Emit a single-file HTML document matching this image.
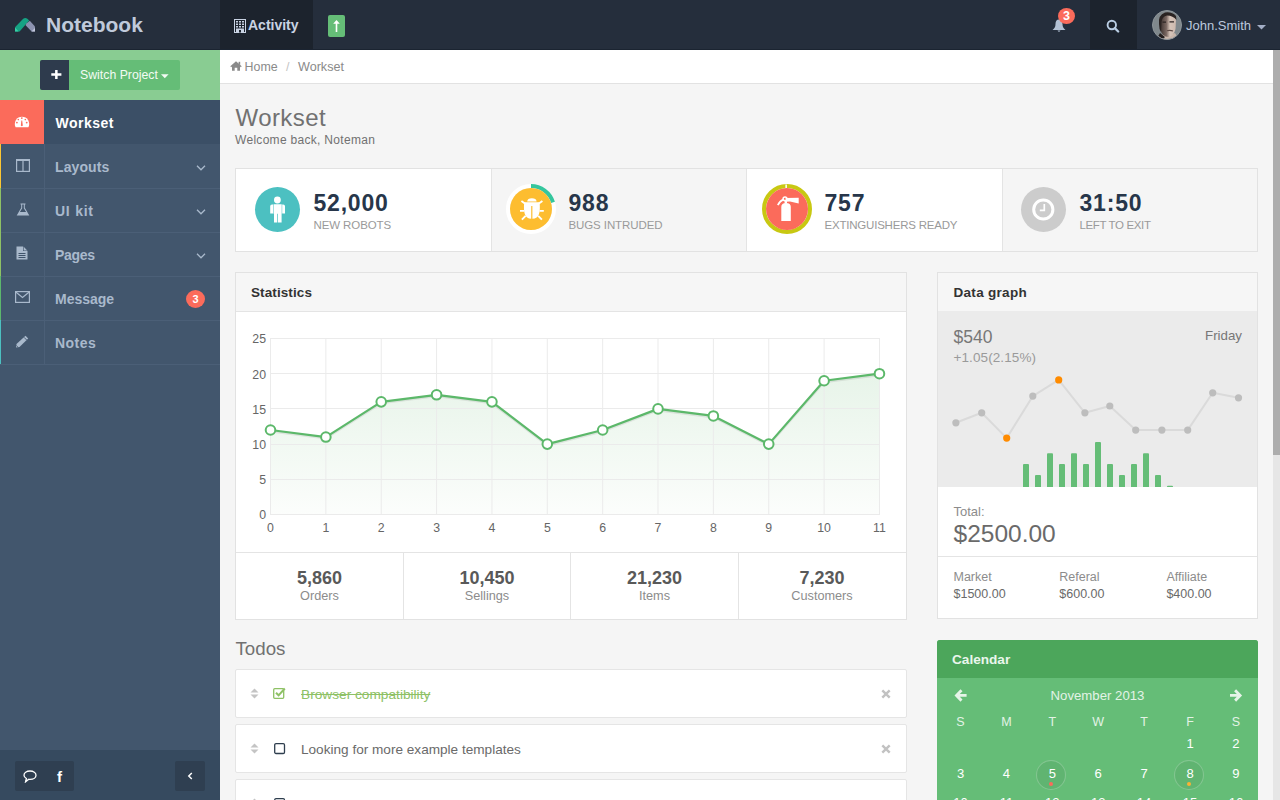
<!DOCTYPE html>
<html><head><meta charset="utf-8"><title>Notebook</title>
<style>
*{box-sizing:border-box;margin:0;padding:0}
html,body{width:1280px;height:800px;overflow:hidden;background:#f5f5f5;font-family:"Liberation Sans",sans-serif}
.a{position:absolute;white-space:nowrap}
#hdr{position:absolute;left:0;top:0;width:1280px;height:50px;background:#252e3c;border-bottom:1px solid #1b2431}
#side{position:absolute;left:0;top:50px;width:220px;height:750px;background:#42566d}
#main{position:absolute;left:220px;top:50px;width:1053px;height:750px;background:#f5f5f5;overflow:hidden}
#sb{position:absolute;left:1273px;top:50px;width:7px;height:750px;background:#e6e6e6}
#sbt{position:absolute;left:1273px;top:50px;width:7px;height:405px;background:#adadad}
.nav{position:absolute;left:0;width:220px;height:44px;border-bottom:1px solid #4a5d73}
.nav .ic{position:absolute;left:0;top:0;width:44px;height:43px;border-right:1px solid #4a5d73}
.nav .t{position:absolute;left:55px;font-size:14px;font-weight:700;color:#a9b9cc;line-height:14px}
.panel{position:absolute;background:#fff;border:1px solid #e3e3e3}
</style></head><body>
<div id="hdr">
<svg class="a" style="left:14px;top:17px" width="23" height="17" viewBox="0 0 23 17">
<path d="M1 14.6 L1 10.2 L9.2 1.8 Q11.2 0.2 13.4 1.8 L15.2 3.6 L5.6 14.6 Z" fill="#16a384"/>
<path d="M1 10.6 L1 14.6 L4.6 14.6 Z" fill="#39d0a6"/>
<path d="M12.4 6.6 L15.8 3.8 L21 9.6 L21 14.6 L17.6 14.6 L11.6 8.2 Z" fill="#8b92b0"/>
<path d="M17.4 14.6 L21 11 L21 14.6 Z" fill="#c3c8dc"/>
</svg>
<div class="a" style="left:46px;top:14.4px;font-size:21px;line-height:21px;font-weight:700;color:#c0cadb">Notebook</div>
<div class="a" style="left:220px;top:0;width:93px;height:49px;background:#1c232d"></div>
<svg class="a" style="left:234px;top:19px" width="12" height="14" viewBox="0 0 12 14">
<rect x="0.5" y="0.5" width="11" height="13" fill="none" stroke="#c9d3e3" stroke-width="1"/>
<g fill="#c9d3e3"><rect x="2" y="2" width="2" height="1.5"/><rect x="5" y="2" width="2" height="1.5"/><rect x="8" y="2" width="2" height="1.5"/>
<rect x="2" y="4.5" width="2" height="1.5"/><rect x="5" y="4.5" width="2" height="1.5"/><rect x="8" y="4.5" width="2" height="1.5"/>
<rect x="2" y="7" width="2" height="1.5"/><rect x="5" y="7" width="2" height="1.5"/><rect x="8" y="7" width="2" height="1.5"/>
<rect x="2" y="9.5" width="8" height="3.5"/></g><rect x="5" y="11" width="2" height="2.5" fill="#1c232d"/>
</svg>
<div class="a" style="left:248px;top:18px;font-size:14px;line-height:14px;font-weight:700;color:#c9d3e3">Activity</div>
<div class="a" style="left:328px;top:15px;width:17px;height:22px;background:#65bd77;border-radius:2px"></div>
<svg class="a" style="left:328px;top:15px" width="17" height="22" viewBox="0 0 17 22">
<path d="M8.5 5 L11.8 8.8 L9.3 8.8 L9.3 17 L7.7 17 L7.7 8.8 L5.2 8.8 Z" fill="#fff"/>
</svg>
<svg class="a" style="left:1052px;top:19px" width="14" height="14" viewBox="0 0 14 14">
<path d="M7 0.5 C4.5 0.5 3.5 2.5 3.5 5 C3.5 8 2.5 9.5 0.5 11 L13.5 11 C11.5 9.5 10.5 8 10.5 5 C10.5 2.5 9.5 0.5 7 0.5 Z M5.5 11.5 Q7 14 8.5 11.5 Z" fill="#b3c1d4"/>
</svg>
<div class="a" style="left:1058px;top:8px;width:17px;height:16px;border-radius:50%;background:#fb6b5b;color:#fff;font-size:12.5px;font-weight:700;line-height:16px;text-align:center">3</div>
<div class="a" style="left:1090px;top:0;width:47px;height:49px;background:#1c232d"></div>
<svg class="a" style="left:1105px;top:19px" width="15" height="14" viewBox="0 0 15 14">
<circle cx="6.8" cy="6" r="4.2" fill="none" stroke="#b9cde3" stroke-width="1.9"/>
<path d="M9.8 9.1 L13.2 12.5" stroke="#b9cde3" stroke-width="2.2" stroke-linecap="round"/>
</svg>
<svg class="a" style="left:1152px;top:10px" width="30" height="30" viewBox="0 0 30 30">
<defs><clipPath id="av"><circle cx="15" cy="15" r="14.5"/></clipPath>
<linearGradient id="fg" x1="0" y1="0" x2="1" y2="0"><stop offset="0" stop-color="#3a302e"/><stop offset="0.4" stop-color="#7a6862"/><stop offset="0.62" stop-color="#d6c4b9"/><stop offset="1" stop-color="#cdb9ae"/></linearGradient></defs>
<g clip-path="url(#av)">
<rect width="30" height="30" fill="#80888c"/>
<path d="M6 30 L8 24 Q15 27 23 23 L27 30 Z" fill="#c9b6ab"/>
<path d="M4 30 L8 23 L13 27 L10 30 Z" fill="#231d1d"/>
<path d="M8 9 Q9 3.5 16 3.5 Q23 4 24 10 L23.5 19 Q22 26 16.5 27 Q10 26.5 8.5 20 Z" fill="url(#fg)"/>
<path d="M7 14 Q6 5 13 2.5 Q20 1.5 24 6 L24.5 10 Q21 5.5 15 5.5 Q10 6.5 9.5 12 L9 22 Q7 19 7 14 Z" fill="#2a2322"/>
<path d="M10.5 12.2 H14 M17.5 11.8 H22" stroke="#2e2625" stroke-width="1.3"/>
<path d="M15 20.8 Q18 19.8 21 21" stroke="#5e4a45" stroke-width="1.1" fill="none"/>
</g>
<circle cx="15" cy="15" r="14.5" fill="none" stroke="#8e959a" stroke-width="1"/>
</svg>
<div class="a" style="left:1186px;top:18.5px;font-size:13px;line-height:13px;color:#bcc8de">John.Smith</div>
<svg class="a" style="left:1257px;top:25px" width="9" height="5" viewBox="0 0 9 5"><path d="M0 0 L9 0 L4.5 4.5 Z" fill="#a3aec6"/></svg>
</div>
<div id="side">
<div class="a" style="left:0;top:0;width:220px;height:50px;background:#89cc92"></div>
<div class="a" style="left:40px;top:10px;width:140px;height:30px;background:#65bd77;border-radius:2px"></div>
<div class="a" style="left:40px;top:10px;width:29px;height:30px;background:#2e3b4d;border-radius:2px 0 0 2px"></div>
<svg class="a" style="left:50.5px;top:20px" width="11" height="9" viewBox="0 0 11 9"><path d="M4.1 0 H6.6 V3.2 H10.4 V5.7 H6.6 V9 H4.1 V5.7 H0.3 V3.2 H4.1 Z" fill="#fff"/></svg>
<div class="a" style="left:80px;top:18.6px;font-size:12.3px;line-height:13px;color:#f3fbf4">Switch Project</div>
<svg class="a" style="left:161px;top:24px" width="8" height="5" viewBox="0 0 8 5"><path d="M0 0.3 L7.6 0.3 L3.8 4.3 Z" fill="#f3fbf4"/></svg>
<!-- nav -->
<div class="a" style="left:0;top:50px;width:220px;height:44px;background:#3b4f66"></div>
<div class="a" style="left:0;top:50px;width:44px;height:44px;background:#fb6b5b"></div>
<svg class="a" style="left:14px;top:65px" width="16" height="13" viewBox="0 0 16 13">
<path d="M1.6 12.2 A7.2 7.2 0 1 1 14.4 12.2 Z" fill="#fff"/>
<g fill="#fb6b5b"><circle cx="7.8" cy="3.1" r="0.9"/><circle cx="4.3" cy="4.6" r="0.8"/><circle cx="11.3" cy="4.6" r="0.8"/><circle cx="2.9" cy="7.6" r="0.9"/><circle cx="12.7" cy="7.6" r="0.9"/><path d="M6.8 10.6 Q7.8 12 8.8 10.6 L8.2 5.5 L7.4 5.5 Z"/></g>
</svg>
<div class="a" style="left:55.5px;top:66.3px;font-size:14px;line-height:14px;font-weight:700;color:#fff;letter-spacing:0.5px">Workset</div>
<div class="a" style="left:0;top:94px;width:1px;height:44px;background:#fcc633"></div>
<div class="a" style="left:0;top:138px;width:220px;height:1px;background:#4b5f77"></div>
<div class="a" style="left:44px;top:94px;width:1px;height:44px;background:#4b5f77"></div>
<svg class="a" style="left:16px;top:109px" width="14" height="13" viewBox="0 0 14 13"><rect x="0.6" y="0.9" width="12.8" height="11.5" fill="none" stroke="#a9b9cc" stroke-width="1.2"/><rect x="0" y="0" width="14" height="2" fill="#a9b9cc"/><path d="M7 0.6 V12.4" stroke="#a9b9cc" stroke-width="1.2"/></svg>
<div class="a" style="left:55px;top:110.3px;font-size:14px;line-height:14px;font-weight:700;color:#a9b9cc;letter-spacing:0.1px">Layouts</div>
<svg class="a" style="left:196px;top:114.5px" width="10" height="6" viewBox="0 0 10 6"><path d="M1 0.8 L5 4.8 L9 0.8" fill="none" stroke="#a9b9cc" stroke-width="1.3"/></svg>
<div class="a" style="left:0;top:138px;width:1px;height:44px;background:#8ec165"></div>
<div class="a" style="left:0;top:182px;width:220px;height:1px;background:#4b5f77"></div>
<div class="a" style="left:44px;top:138px;width:1px;height:44px;background:#4b5f77"></div>
<svg class="a" style="left:16px;top:153px" width="14" height="13" viewBox="0 0 14 13"><path d="M4.5 0.5 H9.5 V1.6 H8.8 V4.8 L13.3 12.5 H0.7 L5.2 4.8 V1.6 H4.5 Z" fill="#a9b9cc"/><path d="M6.2 1.6 V5.2 L3.9 9 H10.1 L7.8 5.2 V1.6 Z" fill="#40546b"/></svg>
<div class="a" style="left:55px;top:154.3px;font-size:14px;line-height:14px;font-weight:700;color:#a9b9cc;letter-spacing:0.75px">UI kit</div>
<svg class="a" style="left:196px;top:158.5px" width="10" height="6" viewBox="0 0 10 6"><path d="M1 0.8 L5 4.8 L9 0.8" fill="none" stroke="#a9b9cc" stroke-width="1.3"/></svg>
<div class="a" style="left:0;top:182px;width:1px;height:44px;background:#8ec165"></div>
<div class="a" style="left:0;top:226px;width:220px;height:1px;background:#4b5f77"></div>
<div class="a" style="left:44px;top:182px;width:1px;height:44px;background:#4b5f77"></div>
<svg class="a" style="left:16px;top:196px" width="12" height="14" viewBox="0 0 12 14"><path d="M0.5 0.5 H7 L11.5 5 V13.5 H0.5 Z" fill="#a9b9cc"/><path d="M7 0.5 V5 H11.5 Z" fill="#40546b"/><path d="M7.6 0.8 L11.2 4.4 H7.6 Z" fill="#a9b9cc"/><path d="M2.5 7.5 H9.5 M2.5 9.5 H9.5 M2.5 11.5 H9.5" stroke="#40546b" stroke-width="1"/></svg>
<div class="a" style="left:55px;top:198.3px;font-size:14px;line-height:14px;font-weight:700;color:#a9b9cc;letter-spacing:-0.3px">Pages</div>
<svg class="a" style="left:196px;top:202.5px" width="10" height="6" viewBox="0 0 10 6"><path d="M1 0.8 L5 4.8 L9 0.8" fill="none" stroke="#a9b9cc" stroke-width="1.3"/></svg>
<div class="a" style="left:0;top:226px;width:1px;height:44px;background:#5cb76d"></div>
<div class="a" style="left:0;top:270px;width:220px;height:1px;background:#4b5f77"></div>
<div class="a" style="left:44px;top:226px;width:1px;height:44px;background:#4b5f77"></div>
<svg class="a" style="left:15px;top:241px" width="15" height="12" viewBox="0 0 15 12"><rect x="0.6" y="0.6" width="13.8" height="10.8" fill="none" stroke="#a9b9cc" stroke-width="1.2"/><path d="M0.8 1 L7.5 6.5 L14.2 1" fill="none" stroke="#a9b9cc" stroke-width="1.2"/></svg>
<div class="a" style="left:55px;top:242.3px;font-size:14px;line-height:14px;font-weight:700;color:#a9b9cc;letter-spacing:0px">Message</div>
<div class="a" style="left:186px;top:239.8px;width:19px;height:18px;border-radius:50%;background:#fb6b5b;color:#fff;font-size:11px;font-weight:700;line-height:18px;text-align:center">3</div>
<div class="a" style="left:0;top:270px;width:1px;height:44px;background:#4cc0c1"></div>
<div class="a" style="left:0;top:314px;width:220px;height:1px;background:#4b5f77"></div>
<div class="a" style="left:44px;top:270px;width:1px;height:44px;background:#4b5f77"></div>
<svg class="a" style="left:15px;top:285px" width="14" height="13" viewBox="0 0 14 13"><path d="M10.5 0.8 L13.2 3.5 L4.5 12 L1 12.5 L1.5 9 Z" fill="#a9b9cc"/><path d="M9 2.3 L11.7 5" stroke="#40546b" stroke-width="0.9"/><path d="M1.3 10.5 L3 12.2" stroke="#40546b" stroke-width="0.8"/></svg>
<div class="a" style="left:55px;top:286.3px;font-size:14px;line-height:14px;font-weight:700;color:#a9b9cc;letter-spacing:0.45px">Notes</div>
<div class="a" style="left:0;top:700px;width:220px;height:50px;background:#364a5f"></div>
<div class="a" style="left:15px;top:711px;width:59px;height:30px;background:#2f3f51;border-radius:2px"></div>
<div class="a" style="left:175px;top:711px;width:30px;height:30px;background:#2f3f51;border-radius:2px"></div>
<svg class="a" style="left:23px;top:720px" width="14" height="13" viewBox="0 0 14 13"><path d="M7 1 C3.5 1 1 2.9 1 5.2 C1 6.6 2 7.8 3.4 8.5 L2.6 11.8 L5.8 9.3 Q6.4 9.4 7 9.4 C10.5 9.4 13 7.5 13 5.2 C13 2.9 10.5 1 7 1 Z" fill="none" stroke="#fff" stroke-width="1.3"/></svg>
<div class="a" style="left:57px;top:719px;font-size:15px;line-height:15px;font-weight:700;color:#fff">f</div>
<svg class="a" style="left:186px;top:721px" width="8" height="10" viewBox="0 0 8 10"><path d="M5.8 2 L2.8 5 L5.8 8" fill="none" stroke="#fff" stroke-width="1.5"/></svg>
</div>
<div id="main">
<div class="a" style="left:0;top:0;width:1053px;height:34px;background:#fff;border-bottom:1px solid #e2e2e2"></div>
<svg class="a" style="left:10px;top:11px" width="12" height="10" viewBox="0 0 12 10"><path d="M6 0.3 L11.7 5.3 L10.8 6.2 L10 5.5 V9.7 H7.3 V6.7 H4.7 V9.7 H2 V5.5 L1.2 6.2 L0.3 5.3 Z" fill="#8a8a8a"/><rect x="8.6" y="0.8" width="1.6" height="3" fill="#8a8a8a"/></svg>
<div class="a" style="left:24.6px;top:10.9px;font-size:12.4px;line-height:13px;color:#8a8a8a">Home</div>
<div class="a" style="left:66px;top:10.9px;font-size:12.4px;line-height:13px;color:#c4c4c4">/</div>
<div class="a" style="left:78px;top:10.9px;font-size:12.6px;line-height:13px;color:#8a8a8a">Workset</div>
<div class="a" style="left:15.6px;top:56px;font-size:24px;line-height:24px;color:#717171;letter-spacing:0.4px">Workset</div>
<div class="a" style="left:15px;top:83.7px;font-size:12px;line-height:12px;color:#717171;letter-spacing:0.3px">Welcome back, Noteman</div>
<div class="a" style="left:15px;top:118px;width:1023px;height:84px;border:1px solid #e2e2e2;background:#fff"></div>
<div class="a" style="left:271px;top:119px;width:255px;height:82px;background:#f5f5f5;border-left:1px solid #e4e4e4"></div>
<div class="a" style="left:526px;top:119px;width:1px;height:82px;background:#e4e4e4"></div>
<div class="a" style="left:782px;top:119px;width:255px;height:82px;background:#f5f5f5;border-left:1px solid #e4e4e4"></div>
<div class="a" style="left:35px;top:137px;width:45px;height:45px;border-radius:50%;background:#4cc0c1"></div>
<svg class="a" style="left:49px;top:146px" width="17" height="27" viewBox="0 0 17 27">
<circle cx="8.4" cy="4" r="3.4" fill="#fff"/>
<path d="M4.6 8.3 H12.7 V17.8 H4.6 Z M1.2 10.2 Q1.2 8.6 3 8.6 H4.1 V17.6 H1.2 Z M16 10.2 Q16 8.6 14.2 8.6 H13.2 V17.6 H16 Z M5 17.6 H8.1 V26.5 H5 Z M8.8 17.6 H12.6 V26.5 H8.8 Z" fill="#fff"/>
</svg>
<svg class="a" style="left:286px;top:134px" width="50" height="50" viewBox="0 0 50 50">
<circle cx="25" cy="25" r="23" fill="none" stroke="#fff" stroke-width="4"/>
<path d="M25 2 A23 23 0 0 1 47 18.3" fill="none" stroke="#35c69d" stroke-width="4"/>
<circle cx="25" cy="25" r="21" fill="#fdbd30"/>
<g fill="#fff">
<path d="M21.2 17.4 Q21.5 14.2 25.9 14.2 Q30.3 14.2 30.6 17.4 Z"/>
<path d="M18.2 18.2 H33.6 Q34.3 26 33 30 Q31.5 34.8 26.4 34.8 V22 H25.2 V34.8 Q20.3 34.8 18.8 30 Q17.5 26 18.2 18.2 Z"/>
</g>
<path d="M15.4 17 L19.6 20 M36.4 17 L32.2 20 M14 26.9 H18.3 M37.8 26.9 H33.5 M15.9 35.6 L19.6 31.8 M35.9 35.6 L32.2 31.8" stroke="#fff" stroke-width="1.9"/>
</svg>
<svg class="a" style="left:542px;top:134px" width="50" height="50" viewBox="0 0 50 50">
<circle cx="25" cy="25" r="23" fill="none" stroke="#c8c812" stroke-width="4"/>
<rect x="23.4" y="0.5" width="1.5" height="4" fill="#fff"/>
<circle cx="25" cy="25" r="21" fill="#fb6b5b"/>
<g fill="#fff">
<path d="M19.3 23 Q19.3 19.2 24 19 Q28.8 19.2 28.8 23 V36.9 H19.3 Z"/>
<circle cx="23" cy="14.8" r="1.9" fill="none" stroke="#fff" stroke-width="1.5"/>
<path d="M23.5 14 L36.7 13.8 V19.6 L28 17.6 L24 17.8 Z"/>
<path d="M21.6 15.4 Q18 16.8 15.8 21.2" fill="none" stroke="#fff" stroke-width="1.7"/>
<rect x="22.6" y="16" width="2.4" height="3.5"/>
</g>
</svg>
<div class="a" style="left:801px;top:137px;width:45px;height:45px;border-radius:50%;background:#cccccc"></div>
<svg class="a" style="left:811px;top:147px" width="24" height="24" viewBox="0 0 24 24">
<circle cx="12.3" cy="12.5" r="9.6" fill="none" stroke="#fff" stroke-width="3"/>
<path d="M13.3 7 V13.3 H8.8" fill="none" stroke="#fff" stroke-width="1.7"/>
</svg>
<div class="a" style="left:93.5px;top:142.4px;font-size:23px;line-height:23px;font-weight:700;color:#27364a;letter-spacing:0.8px">52,000</div>
<div class="a" style="left:93.5px;top:168.5px;font-size:11.5px;line-height:12px;color:#9a9a9a;letter-spacing:-0.1px">NEW ROBOTS</div>
<div class="a" style="left:348.5px;top:142.4px;font-size:23px;line-height:23px;font-weight:700;color:#27364a;letter-spacing:0.8px">988</div>
<div class="a" style="left:348.5px;top:168.5px;font-size:11.5px;line-height:12px;color:#9a9a9a;letter-spacing:-0.1px">BUGS INTRUDED</div>
<div class="a" style="left:604.5px;top:142.4px;font-size:23px;line-height:23px;font-weight:700;color:#27364a;letter-spacing:0.8px">757</div>
<div class="a" style="left:604.5px;top:168.5px;font-size:11.5px;line-height:12px;color:#9a9a9a;letter-spacing:-0.21px">EXTINGUISHERS READY</div>
<div class="a" style="left:859.5px;top:142.4px;font-size:23px;line-height:23px;font-weight:700;color:#27364a;letter-spacing:0.8px">31:50</div>
<div class="a" style="left:859.5px;top:168.5px;font-size:11.5px;line-height:12px;color:#9a9a9a;letter-spacing:-0.36px">LEFT TO EXIT</div>
<div class="a" style="left:15px;top:222px;width:672px;height:348px;border:1px solid #e2e2e2;background:#fff"></div>
<div class="a" style="left:16px;top:223px;width:670px;height:39px;background:#f6f6f6;border-bottom:1px solid #e4e4e4"></div>
<div class="a" style="left:31px;top:235.89999999999998px;font-size:13.5px;line-height:14px;font-weight:700;color:#333;letter-spacing:0.1px">Statistics</div>
<svg class="a" style="left:15px;top:222px" width="672" height="348" viewBox="0 0 672 348" font-family="Liberation Sans" font-size="12.3" fill="#666">
<defs><linearGradient id="ga" x1="0" y1="0" x2="0" y2="1"><stop offset="0" stop-color="#e3f2e5"/><stop offset="1" stop-color="#fbfdfb"/></linearGradient></defs>
<path d="M35.50,158.02 L90.86,165.06 L146.22,129.86 L201.58,122.82 L256.94,129.86 L312.30,172.10 L367.66,158.02 L423.02,136.90 L478.38,143.94 L533.74,172.10 L589.10,108.74 L644.46,101.70 L644.46,242.00 L35.50,242.00 Z" fill="url(#ga)" opacity="0.85"/>
<path d="M35 242.5 H645" stroke="#ebebeb" stroke-width="1"/><path d="M35 207.5 H645" stroke="#ebebeb" stroke-width="1"/><path d="M35 172.5 H645" stroke="#ebebeb" stroke-width="1"/><path d="M35 136.5 H645" stroke="#ebebeb" stroke-width="1"/><path d="M35 101.5 H645" stroke="#ebebeb" stroke-width="1"/><path d="M35 66.5 H645" stroke="#ebebeb" stroke-width="1"/><path d="M35.50 66 V243" stroke="#ebebeb" stroke-width="1"/><path d="M90.86 66 V243" stroke="#ebebeb" stroke-width="1"/><path d="M146.22 66 V243" stroke="#ebebeb" stroke-width="1"/><path d="M201.58 66 V243" stroke="#ebebeb" stroke-width="1"/><path d="M256.94 66 V243" stroke="#ebebeb" stroke-width="1"/><path d="M312.30 66 V243" stroke="#ebebeb" stroke-width="1"/><path d="M367.66 66 V243" stroke="#ebebeb" stroke-width="1"/><path d="M423.02 66 V243" stroke="#ebebeb" stroke-width="1"/><path d="M478.38 66 V243" stroke="#ebebeb" stroke-width="1"/><path d="M533.74 66 V243" stroke="#ebebeb" stroke-width="1"/><path d="M589.10 66 V243" stroke="#ebebeb" stroke-width="1"/><path d="M644.46 66 V243" stroke="#ebebeb" stroke-width="1"/>
<path d="M35.50,159.52 L90.86,166.56 L146.22,131.36 L201.58,124.32 L256.94,131.36 L312.30,173.60 L367.66,159.52 L423.02,138.40 L478.38,145.44 L533.74,173.60 L589.10,110.24 L644.46,103.20" fill="none" stroke="#000" stroke-opacity="0.08" stroke-width="2"/>
<path d="M35.50,158.02 L90.86,165.06 L146.22,129.86 L201.58,122.82 L256.94,129.86 L312.30,172.10 L367.66,158.02 L423.02,136.90 L478.38,143.94 L533.74,172.10 L589.10,108.74 L644.46,101.70" fill="none" stroke="#5cb86a" stroke-width="2.2" stroke-linejoin="round"/>
<circle cx="35.50" cy="158.02" r="4.8" fill="#fff" stroke="#5cb86a" stroke-width="2"/><circle cx="90.86" cy="165.06" r="4.8" fill="#fff" stroke="#5cb86a" stroke-width="2"/><circle cx="146.22" cy="129.86" r="4.8" fill="#fff" stroke="#5cb86a" stroke-width="2"/><circle cx="201.58" cy="122.82" r="4.8" fill="#fff" stroke="#5cb86a" stroke-width="2"/><circle cx="256.94" cy="129.86" r="4.8" fill="#fff" stroke="#5cb86a" stroke-width="2"/><circle cx="312.30" cy="172.10" r="4.8" fill="#fff" stroke="#5cb86a" stroke-width="2"/><circle cx="367.66" cy="158.02" r="4.8" fill="#fff" stroke="#5cb86a" stroke-width="2"/><circle cx="423.02" cy="136.90" r="4.8" fill="#fff" stroke="#5cb86a" stroke-width="2"/><circle cx="478.38" cy="143.94" r="4.8" fill="#fff" stroke="#5cb86a" stroke-width="2"/><circle cx="533.74" cy="172.10" r="4.8" fill="#fff" stroke="#5cb86a" stroke-width="2"/><circle cx="589.10" cy="108.74" r="4.8" fill="#fff" stroke="#5cb86a" stroke-width="2"/><circle cx="644.46" cy="101.70" r="4.8" fill="#fff" stroke="#5cb86a" stroke-width="2"/>
<text x="31" y="247.3" text-anchor="end">0</text><text x="31" y="212.1" text-anchor="end">5</text><text x="31" y="176.9" text-anchor="end">10</text><text x="31" y="141.7" text-anchor="end">15</text><text x="31" y="106.5" text-anchor="end">20</text><text x="31" y="71.3" text-anchor="end">25</text>
<text x="35.5" y="259.5" text-anchor="middle">0</text><text x="90.9" y="259.5" text-anchor="middle">1</text><text x="146.2" y="259.5" text-anchor="middle">2</text><text x="201.6" y="259.5" text-anchor="middle">3</text><text x="256.9" y="259.5" text-anchor="middle">4</text><text x="312.3" y="259.5" text-anchor="middle">5</text><text x="367.7" y="259.5" text-anchor="middle">6</text><text x="423.0" y="259.5" text-anchor="middle">7</text><text x="478.4" y="259.5" text-anchor="middle">8</text><text x="533.7" y="259.5" text-anchor="middle">9</text><text x="589.1" y="259.5" text-anchor="middle">10</text><text x="644.5" y="259.5" text-anchor="middle">11</text>
<path d="M1 280.5 H671" stroke="#e4e4e4"/>
<path d="M168.5 280 V347 M335.5 280 V347 M503.5 280 V347" stroke="#e4e4e4"/>
</svg>
<div class="a" style="left:19.5px;width:160px;text-align:center;top:518.6px;font-size:18px;line-height:18px;font-weight:700;color:#595959">5,860</div>
<div class="a" style="left:19.5px;width:160px;text-align:center;top:539.7px;font-size:12.7px;line-height:13px;color:#8c8c8c">Orders</div>
<div class="a" style="left:187px;width:160px;text-align:center;top:518.6px;font-size:18px;line-height:18px;font-weight:700;color:#595959">10,450</div>
<div class="a" style="left:187px;width:160px;text-align:center;top:539.7px;font-size:12.7px;line-height:13px;color:#8c8c8c">Sellings</div>
<div class="a" style="left:354.5px;width:160px;text-align:center;top:518.6px;font-size:18px;line-height:18px;font-weight:700;color:#595959">21,230</div>
<div class="a" style="left:354.5px;width:160px;text-align:center;top:539.7px;font-size:12.7px;line-height:13px;color:#8c8c8c">Items</div>
<div class="a" style="left:522px;width:160px;text-align:center;top:518.6px;font-size:18px;line-height:18px;font-weight:700;color:#595959">7,230</div>
<div class="a" style="left:522px;width:160px;text-align:center;top:539.7px;font-size:12.7px;line-height:13px;color:#8c8c8c">Customers</div>
<div class="a" style="left:717px;top:222px;width:321px;height:347px;border:1px solid #e2e2e2;background:#fff"></div>
<div class="a" style="left:718px;top:223px;width:319px;height:38px;background:#f6f6f6"></div>
<div class="a" style="left:733.5px;top:235.89999999999998px;font-size:13.5px;line-height:14px;font-weight:700;color:#333;letter-spacing:0.3px">Data graph</div>
<div class="a" style="left:718px;top:261px;width:319px;height:176px;background:#ebebeb"></div>
<svg class="a" style="left:717px;top:261px" width="321" height="176" viewBox="0 0 321 176">
<rect x="86" y="153.0" width="6" height="24.0" rx="1" fill="#65bd77"/><rect x="98" y="164.0" width="6" height="13.0" rx="1" fill="#65bd77"/><rect x="110" y="142.2" width="6" height="34.8" rx="1" fill="#65bd77"/><rect x="122" y="153.0" width="6" height="24.0" rx="1" fill="#65bd77"/><rect x="134" y="142.2" width="6" height="34.8" rx="1" fill="#65bd77"/><rect x="146" y="153.0" width="6" height="24.0" rx="1" fill="#65bd77"/><rect x="158" y="131.0" width="6" height="46.0" rx="1" fill="#65bd77"/><rect x="170" y="153.0" width="6" height="24.0" rx="1" fill="#65bd77"/><rect x="182" y="164.0" width="6" height="13.0" rx="1" fill="#65bd77"/><rect x="194" y="153.0" width="6" height="24.0" rx="1" fill="#65bd77"/><rect x="206" y="142.2" width="6" height="34.8" rx="1" fill="#65bd77"/><rect x="218" y="164.0" width="6" height="13.0" rx="1" fill="#65bd77"/><rect x="230" y="174.8" width="6" height="2.2" rx="1" fill="#65bd77"/>
<path d="M18.9,111.8 L44.7,101.8 L69.7,127.1 L95.8,85.1 L121.7,68.9 L147.9,101.8 L172.8,95.0 L198.7,119.1 L224.9,119.1 L250.7,119.1 L275.7,81.8 L301.5,86.8" fill="none" stroke="#dadada" stroke-width="2" stroke-linejoin="round"/>
<circle cx="18.9" cy="111.8" r="3.6" fill="#bdbdbd"/><circle cx="44.7" cy="101.8" r="3.6" fill="#bdbdbd"/><circle cx="69.7" cy="127.1" r="3.6" fill="#ff8b00"/><circle cx="95.8" cy="85.1" r="3.6" fill="#bdbdbd"/><circle cx="121.7" cy="68.9" r="3.6" fill="#ff8b00"/><circle cx="147.9" cy="101.8" r="3.6" fill="#bdbdbd"/><circle cx="172.8" cy="95.0" r="3.6" fill="#bdbdbd"/><circle cx="198.7" cy="119.1" r="3.6" fill="#bdbdbd"/><circle cx="224.9" cy="119.1" r="3.6" fill="#bdbdbd"/><circle cx="250.7" cy="119.1" r="3.6" fill="#bdbdbd"/><circle cx="275.7" cy="81.8" r="3.6" fill="#bdbdbd"/><circle cx="301.5" cy="86.8" r="3.6" fill="#bdbdbd"/>
</svg>
<div class="a" style="left:733.5px;top:277.8px;font-size:17.5px;line-height:18px;color:#777">$540</div>
<div class="a" style="left:733.5px;top:301.4px;font-size:13.5px;line-height:14px;color:#9a9a9a;letter-spacing:0.1px">+1.05(2.15%)</div>
<div class="a" style="left:930px;width:92px;text-align:right;top:278.7px;font-size:13.3px;line-height:14px;color:#777">Friday</div>
<div class="a" style="left:733.5px;top:455px;font-size:13px;line-height:13px;color:#8c8c8c">Total:</div>
<div class="a" style="left:733.5px;top:470.8px;font-size:24.5px;line-height:25px;color:#6a6a6a">$2500.00</div>
<div class="a" style="left:718px;top:506px;width:319px;height:1px;background:#e4e4e4"></div>
<div class="a" style="left:733.5px;top:520.5px;font-size:12.5px;line-height:13px;color:#8c8c8c">Market</div>
<div class="a" style="left:733.5px;top:537.6px;font-size:12.5px;line-height:13px;color:#6a6a6a">$1500.00</div>
<div class="a" style="left:839.3px;top:520.5px;font-size:12.5px;line-height:13px;color:#8c8c8c">Referal</div>
<div class="a" style="left:839.3px;top:537.6px;font-size:12.5px;line-height:13px;color:#6a6a6a">$600.00</div>
<div class="a" style="left:946.4000000000001px;top:520.5px;font-size:12.5px;line-height:13px;color:#8c8c8c">Affiliate</div>
<div class="a" style="left:946.4000000000001px;top:537.6px;font-size:12.5px;line-height:13px;color:#6a6a6a">$400.00</div>
<div class="a" style="left:717px;top:590px;width:321px;height:200px;background:#65bd77;border-radius:3px 3px 0 0"></div>
<div class="a" style="left:717px;top:590px;width:321px;height:38px;background:#4ca65b;border-radius:3px 3px 0 0"></div>
<div class="a" style="left:732px;top:602.8px;font-size:13.6px;line-height:14px;font-weight:700;color:#eaf6ec">Calendar</div>
<svg class="a" style="left:733px;top:639px" width="14" height="13" viewBox="0 0 14 13"><path d="M1.5,6.4 L7.5,0.2 L9.5,2.3 L6.8,5.1 L13.6,5.1 L13.6,7.7 L6.8,7.7 L9.5,10.5 L7.5,12.7 Z" fill="#e6f4e8"/></svg>
<svg class="a" style="left:1009px;top:639px" width="14" height="13" viewBox="0 0 14 13"><path d="M13.1,6.4 L7.1,0.2 L5.1,2.3 L7.8,5.1 L1.0,5.1 L1.0,7.7 L7.8,7.7 L5.1,10.5 L7.1,12.7 Z" fill="#e6f4e8"/></svg>
<div class="a" style="left:820px;width:115px;text-align:center;top:639px;font-size:13.2px;line-height:14px;color:#e3f3e6">November 2013</div>
<div class="a" style="left:816px;top:710px;width:30px;height:30px;border-radius:50%;border:1px solid rgba(255,255,255,0.22);background:rgba(0,0,0,0.045)"></div>
<div class="a" style="left:954px;top:710px;width:30px;height:30px;border-radius:50%;border:1px solid rgba(255,255,255,0.22);background:rgba(0,0,0,0.045)"></div>
<div class="a" style="left:725.5px;width:30px;text-align:center;top:665.5px;font-size:12.5px;line-height:13px;color:#e3f3e6">S</div>
<div class="a" style="left:771.4px;width:30px;text-align:center;top:665.5px;font-size:12.5px;line-height:13px;color:#e3f3e6">M</div>
<div class="a" style="left:817.3px;width:30px;text-align:center;top:665.5px;font-size:12.5px;line-height:13px;color:#e3f3e6">T</div>
<div class="a" style="left:863.2px;width:30px;text-align:center;top:665.5px;font-size:12.5px;line-height:13px;color:#e3f3e6">W</div>
<div class="a" style="left:909.1px;width:30px;text-align:center;top:665.5px;font-size:12.5px;line-height:13px;color:#e3f3e6">T</div>
<div class="a" style="left:955.0px;width:30px;text-align:center;top:665.5px;font-size:12.5px;line-height:13px;color:#e3f3e6">F</div>
<div class="a" style="left:1000.9px;width:30px;text-align:center;top:665.5px;font-size:12.5px;line-height:13px;color:#e3f3e6">S</div>
<div class="a" style="left:955.0px;width:30px;text-align:center;top:687.3px;font-size:13px;line-height:13px;color:#fff">1</div>
<div class="a" style="left:1000.9px;width:30px;text-align:center;top:687.3px;font-size:13px;line-height:13px;color:#fff">2</div>
<div class="a" style="left:725.5px;width:30px;text-align:center;top:717.3px;font-size:13px;line-height:13px;color:#fff">3</div>
<div class="a" style="left:771.4px;width:30px;text-align:center;top:717.3px;font-size:13px;line-height:13px;color:#fff">4</div>
<div class="a" style="left:817.3px;width:30px;text-align:center;top:717.3px;font-size:13px;line-height:13px;color:#fff">5</div>
<div class="a" style="left:863.2px;width:30px;text-align:center;top:717.3px;font-size:13px;line-height:13px;color:#fff">6</div>
<div class="a" style="left:909.1px;width:30px;text-align:center;top:717.3px;font-size:13px;line-height:13px;color:#fff">7</div>
<div class="a" style="left:955.0px;width:30px;text-align:center;top:717.3px;font-size:13px;line-height:13px;color:#fff">8</div>
<div class="a" style="left:1000.9px;width:30px;text-align:center;top:717.3px;font-size:13px;line-height:13px;color:#fff">9</div>
<div class="a" style="left:725.5px;width:30px;text-align:center;top:746px;font-size:13px;line-height:13px;color:#fff">10</div>
<div class="a" style="left:771.4px;width:30px;text-align:center;top:746px;font-size:13px;line-height:13px;color:#fff">11</div>
<div class="a" style="left:817.3px;width:30px;text-align:center;top:746px;font-size:13px;line-height:13px;color:#fff">12</div>
<div class="a" style="left:863.2px;width:30px;text-align:center;top:746px;font-size:13px;line-height:13px;color:#fff">13</div>
<div class="a" style="left:909.1px;width:30px;text-align:center;top:746px;font-size:13px;line-height:13px;color:#fff">14</div>
<div class="a" style="left:955.0px;width:30px;text-align:center;top:746px;font-size:13px;line-height:13px;color:#fff">15</div>
<div class="a" style="left:1000.9px;width:30px;text-align:center;top:746px;font-size:13px;line-height:13px;color:#fff">16</div>
<div class="a" style="left:829px;top:732px;width:4px;height:4px;border-radius:50%;background:#fb6b5b"></div>
<div class="a" style="left:967px;top:732px;width:4px;height:4px;border-radius:50%;background:#fcb034"></div>
<div class="a" style="left:15.5px;top:589.3px;font-size:18.7px;line-height:19px;color:#717171">Todos</div>
<div class="a" style="left:15px;top:619px;width:672px;height:49px;background:#fff;border:1px solid #e5e5e5;border-radius:2px"></div>
<svg class="a" style="left:30px;top:638px" width="9" height="11" viewBox="0 0 9 11"><path d="M4.5 0.5 L8.5 4.5 H0.5 Z M4.5 10.5 L8.5 6.5 H0.5 Z" fill="#c4c4c4"/></svg>
<svg class="a" style="left:53px;top:637px" width="13" height="12" viewBox="0 0 13 12"><rect x="0.7" y="1.7" width="10" height="9.6" rx="1" fill="none" stroke="#8ec165" stroke-width="1.3"/><path d="M3 5.8 L5.6 8.3 L11.8 1.5" fill="none" stroke="#8ec165" stroke-width="2"/></svg>
<div class="a" style="left:81px;top:638.1px;font-size:13.7px;line-height:14px;color:#8ec165;text-decoration:line-through">Browser compatibility</div>
<svg class="a" style="left:661px;top:639px" width="10" height="10" viewBox="0 0 10 10"><path d="M1.3 1.3 L8.7 8.7 M8.7 1.3 L1.3 8.7" stroke="#c2c2c2" stroke-width="2.4"/></svg>
<div class="a" style="left:15px;top:674px;width:672px;height:49px;background:#fff;border:1px solid #e5e5e5;border-radius:2px"></div>
<svg class="a" style="left:30px;top:693px" width="9" height="11" viewBox="0 0 9 11"><path d="M4.5 0.5 L8.5 4.5 H0.5 Z M4.5 10.5 L8.5 6.5 H0.5 Z" fill="#c4c4c4"/></svg>
<svg class="a" style="left:53.5px;top:692.5px" width="12" height="12" viewBox="0 0 12 12"><rect x="0.7" y="0.7" width="9.8" height="9.8" rx="1.3" fill="none" stroke="#2e3e4e" stroke-width="1.3"/></svg>
<div class="a" style="left:81px;top:693.1px;font-size:13.6px;line-height:14px;color:#6a6a6a">Looking for more example templates</div>
<svg class="a" style="left:661px;top:694px" width="10" height="10" viewBox="0 0 10 10"><path d="M1.3 1.3 L8.7 8.7 M8.7 1.3 L1.3 8.7" stroke="#c2c2c2" stroke-width="2.4"/></svg>
<div class="a" style="left:15px;top:729px;width:672px;height:49px;background:#fff;border:1px solid #e5e5e5;border-radius:2px"></div>
<svg class="a" style="left:30px;top:748px" width="9" height="11" viewBox="0 0 9 11"><path d="M4.5 0.5 L8.5 4.5 H0.5 Z M4.5 10.5 L8.5 6.5 H0.5 Z" fill="#c4c4c4"/></svg>
<svg class="a" style="left:53.5px;top:747.5px" width="12" height="12" viewBox="0 0 12 12"><rect x="0.7" y="0.7" width="9.8" height="9.8" rx="1.3" fill="none" stroke="#2e3e4e" stroke-width="1.3"/></svg>
</div>
<div id="sb"></div><div id="sbt"></div>
</body></html>
